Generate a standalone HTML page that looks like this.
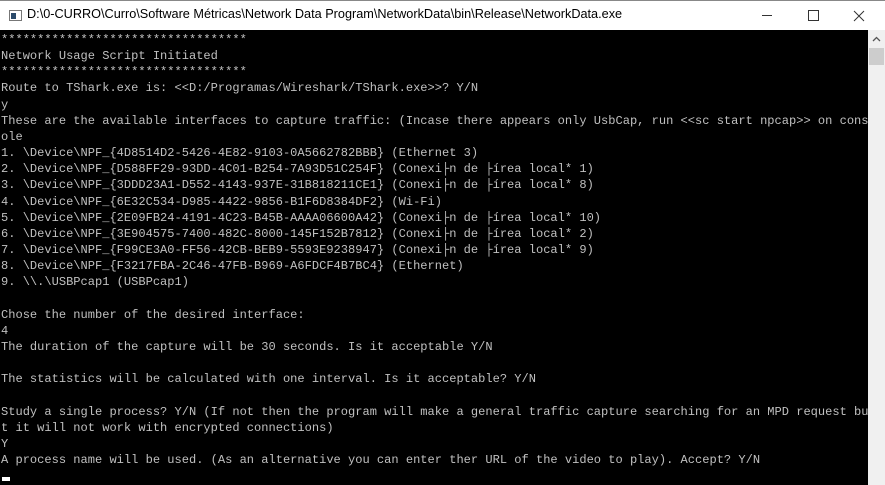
<!DOCTYPE html>
<html><head><meta charset="utf-8"><style>
html,body{margin:0;padding:0;width:885px;height:485px;overflow:hidden;background:#000}
.tb{position:absolute;left:0;top:0;width:885px;height:30px;background:#fff;border-top:1px solid #888;box-sizing:border-box}
.tt{position:absolute;left:27px;top:6px;font:12.7px "Liberation Sans",sans-serif;color:#000}
.ic{position:absolute;left:9px;top:9px;width:13px;height:11px;border:1px solid #777;box-sizing:border-box;background:#fff}
.ic:before{content:"";position:absolute;left:1px;top:2px;width:5px;height:6px;background:#2a4a6a}
.ctl{position:absolute;top:0;height:30px;width:46px;text-align:center;font:16px "Liberation Sans",sans-serif;color:#222}
.con{position:absolute;left:0;top:30px;width:868px;height:455px;background:#000;overflow:hidden}
pre{margin:0;padding:2px 0 0 1px;font:12.05px/16.15px "Liberation Mono","DejaVu Sans Mono",monospace;color:#c0c0c0;white-space:pre}
.sb{position:absolute;left:868px;top:30px;width:17px;height:455px;background:#f0f0f0}
.th{position:absolute;left:1px;top:18px;width:15px;height:17px;background:#cdcdcd}
.cur{position:absolute;left:2px;top:477px;width:8px;height:4px;background:#fff}
</style></head><body>
<div class="tb"><div class="ic"></div><div class="tt">D:\0-CURRO\Curro\Software Métricas\Network Data Program\NetworkData\bin\Release\NetworkData.exe</div>
<div class="ctl" style="left:744px"><div style="position:absolute;left:18px;top:14px;width:10px;height:1px;background:#333"></div></div>
<div class="ctl" style="left:790px"><div style="position:absolute;left:18px;top:9px;width:9px;height:9px;border:1px solid #333"></div></div>
<div class="ctl" style="left:836px"><svg width="46" height="30" style="position:absolute;left:0;top:0"><path d="M18 10L28 20M28 10L18 20" stroke="#333" stroke-width="1"/></svg></div>
</div>
<div class="con"><pre>**********************************
Network Usage Script Initiated
**********************************
Route to TShark.exe is: &lt;&lt;D:/Programas/Wireshark/TShark.exe&gt;&gt;? Y/N
y
These are the available interfaces to capture traffic: (Incase there appears only UsbCap, run &lt;&lt;sc start npcap&gt;&gt; on cons
ole
1. \Device\NPF_{4D8514D2-5426-4E82-9103-0A5662782BBB} (Ethernet 3)
2. \Device\NPF_{D588FF29-93DD-4C01-B254-7A93D51C254F} (Conexi├n de ├írea local* 1)
3. \Device\NPF_{3DDD23A1-D552-4143-937E-31B818211CE1} (Conexi├n de ├írea local* 8)
4. \Device\NPF_{6E32C534-D985-4422-9856-B1F6D8384DF2} (Wi-Fi)
5. \Device\NPF_{2E09FB24-4191-4C23-B45B-AAAA06600A42} (Conexi├n de ├írea local* 10)
6. \Device\NPF_{3E904575-7400-482C-8000-145F152B7812} (Conexi├n de ├írea local* 2)
7. \Device\NPF_{F99CE3A0-FF56-42CB-BEB9-5593E9238947} (Conexi├n de ├írea local* 9)
8. \Device\NPF_{F3217FBA-2C46-47FB-B969-A6FDCF4B7BC4} (Ethernet)
9. \\.\USBPcap1 (USBPcap1)

Chose the number of the desired interface:
4
The duration of the capture will be 30 seconds. Is it acceptable Y/N

The statistics will be calculated with one interval. Is it acceptable? Y/N

Study a single process? Y/N (If not then the program will make a general traffic capture searching for an MPD request bu
t it will not work with encrypted connections)
Y
A process name will be used. (As an alternative you can enter ther URL of the video to play). Accept? Y/N</pre></div>
<div class="sb"><svg width="17" height="17" style="position:absolute;left:0;top:0"><path d="M5 11L8.5 7.5L12 11" stroke="#555" stroke-width="1.3" fill="none"/></svg><div class="th"></div></div>
<div class="cur"></div>
</body></html>
